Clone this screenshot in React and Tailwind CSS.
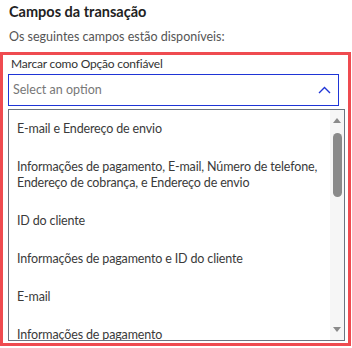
import React from "react";

const options = [
  "E-mail e Endereço de envio",
  "Informações de pagamento, E-mail, Número de telefone, Endereço de cobrança, e Endereço de envio",
  "ID do cliente",
  "Informações de pagamento e ID do cliente",
  "E-mail",
  "Informações de pagamento",
];

const ChevronUp = () => (
  <svg width="13" height="8" viewBox="0 0 13 8" fill="none">
    <path d="M1 7L6.5 1.5L12 7" stroke="#1f35d6" strokeWidth="1.4" />
  </svg>
);

const App = () => {
  return (
    <div className="w-[352px] h-[348px] overflow-hidden bg-white font-['Lato',sans-serif] text-[#333]">
      <div className="px-[9px] pt-[3px]">
        <h2 className="text-[14.5px] leading-[18px] font-bold text-[#222]">Campos da transação</h2>
        <p className="mt-[7px] text-[12.5px] leading-[18px] text-[#555]">Os seguintes campos estão disponíveis:</p>
      </div>

      <div className="mt-[6px] w-[351px] h-[294px] border-[3px] border-[#ef4b50] pl-[5px] pr-[3px]">
        <label className="block pl-[3px] pt-[1px] h-[19px] text-[12px] leading-[16px] tracking-[-0.2px] text-[#333]">
          Marcar como Opção confiável
        </label>
        <div className="w-[331px] h-[32px] border-[1.5px] border-[#1f35d6] flex items-center justify-between pl-[4px] pr-[7px]">
          <span className="text-[12.5px] text-[#777]">Select an option</span>
          <ChevronUp />
        </div>
        <div className="mt-[3px] w-[337px] h-[232px] border border-[#6b7480] flex overflow-hidden">
          <ul className="flex-1 overflow-hidden">
            {options.map((opt) => (
              <li key={opt} className="pl-[8px] pr-[2px] py-[11px] text-[12.5px] leading-[16px] tracking-[-0.15px] text-[#3a3a3a]">
                {opt}
              </li>
            ))}
          </ul>
          <div className="w-[14px] bg-[#f6f6f6] flex flex-col items-center pt-[8px] pb-[8px]">
            <div className="w-0 h-0 border-l-[4.5px] border-r-[4.5px] border-b-[5px] border-l-transparent border-r-transparent border-b-[#8a8a8a]" />
            <div className="mt-[10px] w-[9px] h-[64px] rounded-full bg-[#8a8a8a]" />
            <div className="flex-1" />
            <div className="w-0 h-0 border-l-[4.5px] border-r-[4.5px] border-t-[5px] border-l-transparent border-r-transparent border-t-[#8a8a8a]" />
          </div>
        </div>
      </div>
    </div>
  );
};

export default App;
